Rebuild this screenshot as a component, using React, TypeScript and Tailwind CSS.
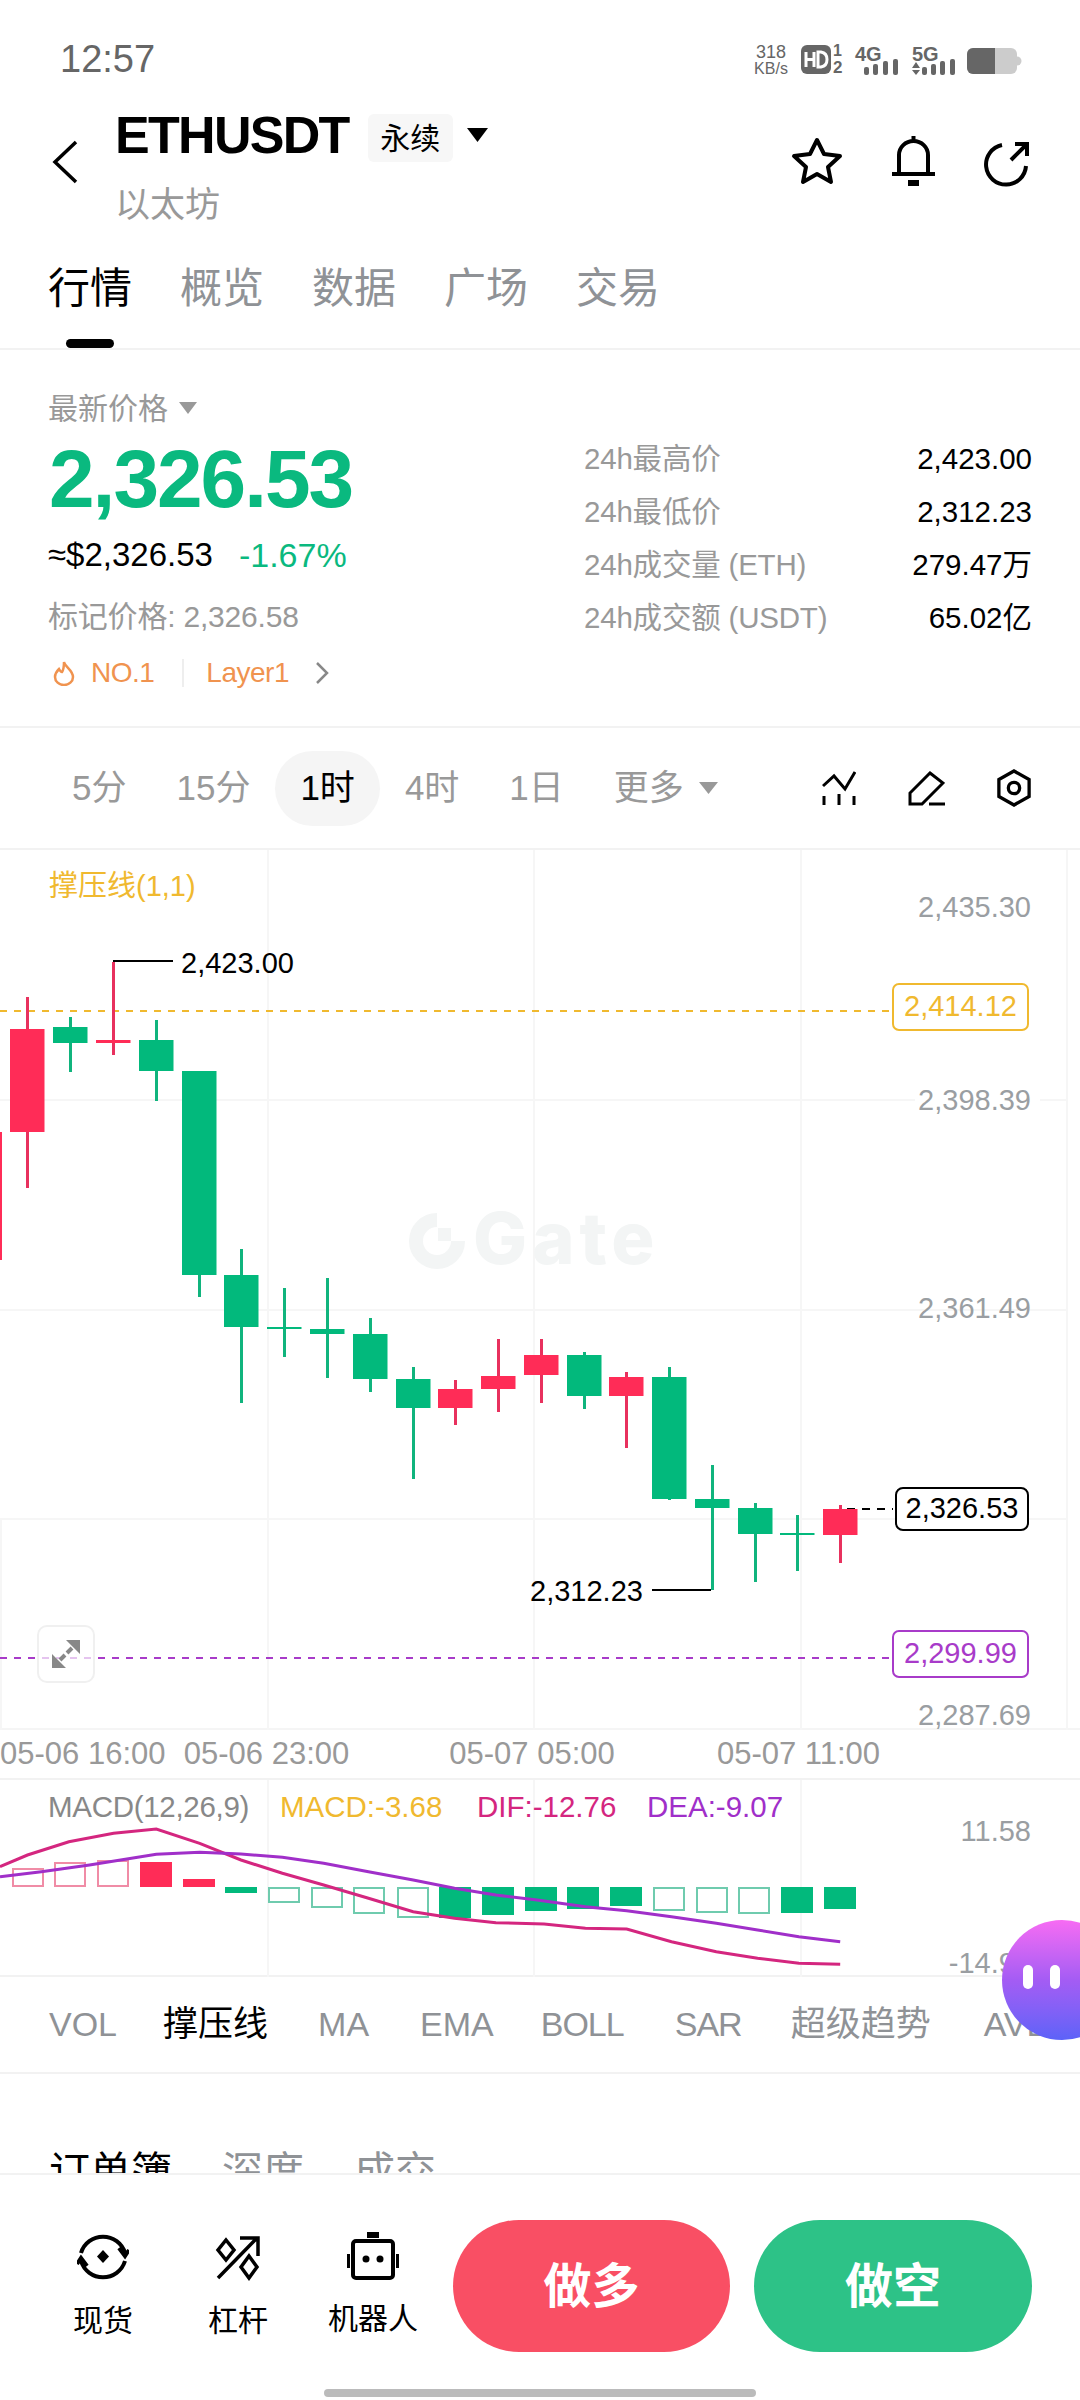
import React from "react";

type C = [number, number, number, number, number, "g" | "r"];
const candles: C[] = [
  [10, 1029, 1132, 997, 1188, "r"],
  [53, 1027, 1043, 1017, 1072, "g"],
  [96, 1040, 1043, 962, 1055, "r"],
  [139, 1040, 1071, 1020, 1101, "g"],
  [182, 1071, 1275, 1071, 1297, "g"],
  [224, 1275, 1327, 1249, 1403, "g"],
  [267, 1327, 1329, 1288, 1357, "g"],
  [310, 1329, 1334, 1278, 1378, "g"],
  [353, 1334, 1379, 1318, 1392, "g"],
  [396, 1379, 1408, 1367, 1479, "g"],
  [438, 1389, 1408, 1380, 1425, "r"],
  [481, 1376, 1389, 1339, 1412, "r"],
  [524, 1355, 1375, 1339, 1403, "r"],
  [567, 1355, 1396, 1352, 1409, "g"],
  [609, 1377, 1396, 1372, 1448, "r"],
  [652, 1377, 1499, 1367, 1500, "g"],
  [695, 1499, 1508, 1465, 1590, "g"],
  [738, 1508, 1534, 1503, 1582, "g"],
  [780, 1533, 1535, 1515, 1571, "g"],
  [823, 1509, 1535, 1505, 1563, "r"],
];

type B = [number, number, number, string, boolean];
const R = "#FF2C57";
const G = "#02B97C";
const bars: B[] = [
  [12, 1868, 1887, "#F08CA6", false],
  [54, 1862, 1887, "#F08CA6", false],
  [97, 1860, 1887, "#F08CA6", false],
  [140, 1862, 1887, R, true],
  [183, 1879, 1887, R, true],
  [225, 1887, 1893, G, true],
  [268, 1887, 1903, "#6FCBAE", false],
  [311, 1887, 1908, "#6FCBAE", false],
  [353, 1887, 1914, "#6FCBAE", false],
  [397, 1887, 1918, "#6FCBAE", false],
  [439, 1887, 1918, G, true],
  [482, 1887, 1915, G, true],
  [525, 1887, 1911, G, true],
  [567, 1887, 1909, G, true],
  [610, 1887, 1906, G, true],
  [653, 1887, 1911, "#6FCBAE", false],
  [696, 1887, 1913, "#6FCBAE", false],
  [738, 1887, 1914, "#6FCBAE", false],
  [781, 1887, 1913, G, true],
  [824, 1887, 1909, G, true],
];

const toPts = (p: number[][]) => p.map(([x, y]) => `${(x / 1.452).toFixed(1)},${(y / 3 + 1700).toFixed(1)}`).join(" ");
const dif = toPts([[0,500],[40,465],[100,425],[165,400],[227,387],[290,430],[350,480],[410,520],[470,555],[535,595],[600,635],[660,655],[720,668],[790,672],[850,685],[910,687],[975,725],[1040,755],[1100,775],[1160,790],[1220,793]]);
const dea = toPts([[0,530],[60,515],[130,495],[227,463],[290,457],[350,462],[410,472],[470,490],[535,515],[600,540],[660,565],[720,585],[780,600],[850,620],[910,632],[975,650],[1040,670],[1100,690],[1160,710],[1220,725]]);

function Caret({ className }: { className: string }) {
  return (
    <svg viewBox="0 0 20 14" className={className} preserveAspectRatio="none">
      <path d="M0 0H20L10 14Z" fill="currentColor" />
    </svg>
  );
}

function StatusIcons() {
  return (
    <svg viewBox="800 40 225 40" className="w-[225px] h-[40px]">
      <rect x="801" y="45" width="30" height="29" rx="6" fill="#666" />
      <path d="M806 52v15M806 59.500h8M814 52v15" stroke="#fff" strokeWidth="3" fill="none" />
      <path d="M818 52v15h3q6-1 6-7.500t-6-7.500z" stroke="#fff" strokeWidth="3" fill="none" />
      <rect x="864" y="67" width="5" height="8" rx="2" fill="#666" />
      <rect x="873" y="64" width="5" height="11" rx="2" fill="#666" />
      <rect x="883" y="61" width="5" height="14" rx="2" fill="#666" />
      <rect x="893" y="59" width="5" height="16" rx="2" fill="#666" />
      <path d="M912 68h8l-4-6zM912 70h8l-4 5z" fill="#666" />
      <rect x="922" y="67" width="5" height="8" rx="2" fill="#666" />
      <rect x="931" y="64" width="5" height="11" rx="2" fill="#666" />
      <rect x="940" y="61" width="5" height="14" rx="2" fill="#666" />
      <rect x="950" y="59" width="5" height="16" rx="2" fill="#666" />
      <rect x="967" y="48" width="50" height="26" rx="6" fill="#ccc" />
      <path d="M973 48h22v26h-22a6 6 0 0 1-6-6v-14a6 6 0 0 1 6-6z" fill="#666" />
      <path d="M1017 56.500a4.500 4.500 0 0 1 0 9z" fill="#ccc" />
    </svg>
  );
}

export default function App() {
  return (
    <div className="relative w-[1080px] h-[2400px] overflow-hidden bg-white text-black [font-family:'Liberation_Sans','Noto_Sans_CJK_SC',sans-serif]">
      {/* status bar */}
      <div className="relative h-[106px] pl-[60px] pt-[40px]">
        <span className="text-[38px] leading-[38px] text-[#666]">12:57</span>
        <div className="absolute left-[800px] top-[40px]">
          <StatusIcons />
          <span className="absolute left-[-48px] top-[3px] w-[38px] text-center text-[18px] leading-[18px] text-[#666]">318</span>
          <span className="absolute left-[-48px] top-[21px] w-[38px] text-center text-[16px] leading-[16px] text-[#666]">KB/s</span>
          <span className="absolute left-[33px] top-[3px] text-[16px] leading-[16px] font-bold text-[#666]">1</span>
          <span className="absolute left-[33px] top-[20px] text-[17px] leading-[16px] font-bold text-[#666]">2</span>
          <span className="absolute left-[55px] top-[4px] text-[20px] leading-[20px] font-bold text-[#666]">4G</span>
          <span className="absolute left-[112px] top-[4px] text-[20px] leading-[20px] font-bold text-[#666]">5G</span>
        </div>
      </div>

      {/* header */}
      <div className="flex h-[134px] pl-[52px] pr-[50px]">
        <svg viewBox="0 0 26 44" className="w-[26px] h-[44px] mt-[34px]" fill="none" stroke="#000" strokeWidth="3.500">
          <path d="M24 2L3 22L24 42" />
        </svg>
        <div className="ml-[37px] flex flex-col">
          <div className="flex h-[58px] items-center">
            <span className="text-[52px] leading-[58px] font-bold tracking-[-1.700px]">ETHUSDT</span>
            <span className="ml-[19px] mt-[6px] flex h-[48px] w-[85px] items-center justify-center rounded-[6px] bg-[#f7f7f7] text-[30px]">永续</span>
            <Caret className="ml-[14px] w-[21px] h-[14px]" />
          </div>
          <div className="mt-[11px] h-[60px] text-[35px] leading-[60px] text-[#999]">以太坊</div>
        </div>
        <div className="ml-auto flex items-start gap-[48px] pt-[30px]">
          <svg viewBox="0 0 52 48" className="w-[52px] h-[48px] mt-[1px]" fill="none" stroke="#000" strokeWidth="4" strokeLinejoin="round">
            <path d="M26 3L33 17L49 19L37 30L40 45L26 37L12 45L15 30L3 19L19 17Z" />
          </svg>
          <svg viewBox="0 0 45 50" className="w-[45px] h-[50px]" fill="none" stroke="#000" strokeWidth="4">
            <path d="M22.500 0v5M8 36V19a14.500 14 0 0 1 29 0V36M1 38H44" />
            <rect x="17" y="44" width="11" height="6" fill="#000" stroke="none" />
          </svg>
          <svg viewBox="0 0 46 46" className="w-[46px] h-[46px] mt-[5px]" fill="none" stroke="#000" strokeWidth="4">
            <path d="M18 4A20 20 0 1 0 42 25M27 19L43 3M31 3H43V15" />
          </svg>
        </div>
      </div>

      {/* tabs */}
      <div className="flex h-[110px] gap-[48px] border-b-2 border-[#f2f2f2] pl-[48px] pt-[24px] text-[42px] leading-[50px] text-[#8f9296]">
        <div className="relative flex flex-col items-center text-black">
          行情
          <div className="absolute top-[75px] h-[9px] w-[48px] rounded-full bg-black" />
        </div>
        <div>概览</div>
        <div>数据</div>
        <div>广场</div>
        <div>交易</div>
      </div>

      {/* price */}
      <div className="flex h-[378px] justify-between border-b-2 border-[#f2f2f2] pl-[48px] pr-[48px]">
        <div className="pt-[40px]">
          <div className="flex h-[36px] items-center text-[30px] text-[#999]">
            最新价格
            <Caret className="ml-[11px] w-[18px] h-[12px]" />
          </div>
          <div className="mt-[13px] ml-[1px] h-[80px] text-[82px] leading-[80px] font-bold tracking-[-2px] text-[#0AB97F]">2,326.53</div>
          <div className="mt-[16px] flex h-[40px] items-center gap-[26px]">
            <span className="text-[33px]">≈$2,326.53</span>
            <span className="text-[34px] text-[#0AB97F]">-1.67%</span>
          </div>
          <div className="mt-[22px] h-[40px] text-[30px] leading-[40px] tracking-[-0.200px] text-[#999]">标记价格: 2,326.58</div>
          <div className="mt-[18px] flex h-[36px] items-center text-[28px] tracking-[-0.500px] text-[#F0934F]">
            <svg viewBox="0 0 22 26" className="ml-[5px] w-[22px] h-[26px]" fill="none" stroke="#F0934F" strokeWidth="2.500">
              <path d="M11 2C12 7 20 10 20 17A9 8 0 0 1 2 17C2 13 4 11 6 9C7 11 8 12 9 12C11 9 11 5 11 2Z" />
            </svg>
            <span className="ml-[16px]">NO.1</span>
            <div className="ml-[28px] h-[28px] w-[2px] bg-[#eee]" />
            <span className="ml-[22px]">Layer1</span>
            <svg viewBox="0 0 14 24" className="ml-[26px] w-[14px] h-[24px]" fill="none" stroke="#888" strokeWidth="2.500">
              <path d="M2 2L12 12L2 22" />
            </svg>
          </div>
        </div>
        <div className="w-[448px] pt-[82px] text-[29.500px] leading-[53px]">
          <div className="flex justify-between"><span className="tracking-[-0.200px] text-[#999]">24h最高价</span><span>2,423.00</span></div>
          <div className="flex justify-between"><span className="tracking-[-0.200px] text-[#999]">24h最低价</span><span>2,312.23</span></div>
          <div className="flex justify-between"><span className="tracking-[-0.200px] text-[#999]">24h成交量 (ETH)</span><span>279.47万</span></div>
          <div className="flex justify-between"><span className="tracking-[-0.200px] text-[#999]">24h成交额 (USDT)</span><span>65.02亿</span></div>
        </div>
      </div>

      {/* intervals */}
      <div className="flex h-[122px] items-center border-b-2 border-[#f2f2f2] pl-[47px] pr-[49px] text-[35px] text-[#999]">
        <div className="px-[25px]">5分</div>
        <div className="px-[25px]">15分</div>
        <div className="flex h-[75px] items-center rounded-full bg-[#f5f5f5] px-[25px] text-black">1时</div>
        <div className="px-[25px]">4时</div>
        <div className="px-[25px]">1日</div>
        <div className="flex items-center pl-[25px]">
          更多
          <Caret className="ml-[15px] w-[19px] h-[12px]" />
        </div>
        <div className="ml-auto flex items-center gap-[52px]">
          <svg viewBox="0 0 34 34" className="w-[34px] h-[34px]" fill="none" stroke="#000" strokeWidth="3">
            <path d="M1 15L12 5L23 18L33 1M2 25V34M17 23V34M32 25V34" />
          </svg>
          <svg viewBox="0 0 37 35" className="w-[37px] h-[35px]" fill="none" stroke="#000" strokeWidth="3">
            <path d="M22 2L35 12L14 33H2V22ZM21 33H37" />
          </svg>
          <svg viewBox="0 0 36 40" className="w-[34px] h-[38px]" fill="none" stroke="#000" strokeWidth="3.500">
            <path d="M18 2L34 11V29L18 38L2 29V11Z" />
            <circle cx="18" cy="20" r="6" />
          </svg>
        </div>
      </div>

      {/* chart */}
      <div className="relative h-[880px] border-b-2 border-[#f5f5f5]">
        <svg viewBox="0 850 1080 880" className="absolute inset-0 w-[1080px] h-[880px]">
          <g stroke="#f6f6f6" strokeWidth="2" fill="none">
            <path d="M268 850V1730M534 850V1730M801 850V1730M1067 850V1730M1 1520V1730" />
            <path d="M0 1100H915M1040 1100H1067M0 1310H1067M0 1519H1067" />
          </g>
          <path d="M0 1011H892" stroke="#F0B92F" strokeWidth="2" strokeDasharray="7 7" />
          <path d="M0 1658H892" stroke="#A83BC9" strokeWidth="2" strokeDasharray="7 7" />
          <rect x="0" y="1132" width="2" height="128" fill={R} />
          <path d="M113 961H173M652 1590H711" stroke="#000" strokeWidth="2" />
          <path d="M847 1509H893" stroke="#000" strokeWidth="2" strokeDasharray="8 7" />
          {candles.map(([x, t, b, wt, wb, c], i) => (
            <g key={i}>
              <rect x={x + 16} y={wt} width="3" height={wb - wt} fill={c === "g" ? "#10B47D" : "#E8315E"} />
              <rect x={x} y={t} width="34.500" height={b - t} fill={c === "g" ? G : R} />
            </g>
          ))}
          {/* watermark logo */}
          <path d="M437 1220A21 21 0 1 0 458 1241" fill="none" stroke="#f3f5f5" strokeWidth="14" />
          <rect x="438" y="1228" width="13" height="13" fill="#f3f5f5" />
        </svg>
        <span className="absolute left-[473px] top-[343px] text-[72px] leading-[90px] font-extrabold tracking-[5px] text-[#f3f5f5] [font-family:Inter,sans-serif]">Gate</span>
        <span className="absolute left-[49px] top-[18px] text-[29px] leading-[36px] text-[#F0B92F]">撑压线(1,1)</span>
        <span className="absolute left-[181px] top-[95px] text-[29px] leading-[36px]">2,423.00</span>
        <span className="absolute left-[530px] top-[723px] text-[29px] leading-[36px]">2,312.23</span>
        <span className="absolute right-[49px] top-[39px] text-[29px] leading-[36px] text-[#9a9ea2]">2,435.30</span>
        <span className="absolute right-[49px] top-[232px] text-[29px] leading-[36px] text-[#9a9ea2]">2,398.39</span>
        <span className="absolute right-[49px] top-[440px] text-[29px] leading-[36px] text-[#9a9ea2]">2,361.49</span>
        <span className="absolute right-[49px] top-[847px] text-[29px] leading-[36px] text-[#9a9ea2]">2,287.69</span>
        <div className="absolute left-[892px] top-[133px] flex h-[48px] w-[137px] items-center justify-center rounded-[7px] border-2 border-[#F0B92F] bg-white text-[29px] text-[#F0B92F]">2,414.12</div>
        <div className="absolute left-[895px] top-[637px] flex h-[44px] w-[134px] items-center justify-center rounded-[8px] border-2 border-black bg-white text-[29px]">2,326.53</div>
        <div className="absolute left-[892px] top-[780px] flex h-[48px] w-[137px] items-center justify-center rounded-[7px] border-2 border-[#A83BC9] bg-white text-[29px] text-[#A83BC9]">2,299.99</div>
        <div className="absolute left-[37px] top-[775px] flex h-[58px] w-[58px] items-center justify-center rounded-[10px] border-2 border-[#f0f0f0] bg-white/70">
          <svg viewBox="0 0 28 28" className="w-[28px] h-[28px]">
            <path d="M14 0H28V14ZM0 14V28H14Z" fill="#888" />
            <path d="M20 8L15 13M8 20L13 15" stroke="#888" strokeWidth="4" />
          </svg>
        </div>
      </div>

      {/* time axis */}
      <div className="flex h-[50px] items-center border-b-2 border-[#f2f2f2] text-[31px] text-[#999]">
        <div className="w-[134px] whitespace-nowrap">05-06 16:00</div>
        <div className="w-[265px] text-center whitespace-nowrap">05-06 23:00</div>
        <div className="w-[266px] text-center whitespace-nowrap">05-07 05:00</div>
        <div className="w-[267px] text-center whitespace-nowrap">05-07 11:00</div>
      </div>

      {/* macd */}
      <div className="relative h-[197px] border-b-2 border-[#f2f2f2]">
        <svg viewBox="0 1780 1080 197" className="absolute inset-0 w-[1080px] h-[197px]">
          <g stroke="#f6f6f6" strokeWidth="2">
            <path d="M268 1780V1977M534 1780V1977M801 1780V1977" />
          </g>
          {bars.map(([x, t, b, c, solid], i) =>
            solid ? (
              <rect key={i} x={x} y={t} width="32" height={b - t} fill={c} />
            ) : (
              <rect key={i} x={x + 1} y={t + 1} width="30" height={b - t - 2} fill="none" stroke={c} strokeWidth="2" />
            )
          )}
          <polyline points={dif} fill="none" stroke="#D4267F" strokeWidth="3" />
          <polyline points={dea} fill="none" stroke="#A02FC9" strokeWidth="3" />
        </svg>
        <div className="absolute left-[48px] top-[9px] flex text-[29.500px] leading-[36px]">
          <span className="w-[232px] tracking-[-0.300px] text-[#888]">MACD(12,26,9)</span>
          <span className="w-[197px] text-[#F0B92F]">MACD:-3.68</span>
          <span className="w-[170px] text-[#D4267F]">DIF:-12.76</span>
          <span className="text-[#A02FC9]">DEA:-9.07</span>
        </div>
        <span className="absolute right-[49px] top-[33px] text-[29px] leading-[36px] text-[#9a9ea2]">11.58</span>
        <span className="absolute right-[49px] top-[165px] text-[29px] leading-[36px] text-[#9a9ea2]">-14.94</span>
      </div>

      {/* indicators */}
      <div className="flex h-[97px] items-center overflow-hidden border-b-2 border-[#f2f2f2] pl-[49px] text-[34px] whitespace-nowrap text-[#8f9296]">
        <span>VOL</span>
        <span className="ml-[46px] text-[35px] text-black">撑压线</span>
        <span className="ml-[50px]">MA</span>
        <span className="ml-[51px]">EMA</span>
        <span className="ml-[47px] tracking-[-1px]">BOLL</span>
        <span className="ml-[51px] tracking-[-1px]">SAR</span>
        <span className="ml-[49px] text-[35px]">超级趋势</span>
        <span className="ml-[53px]">AVL</span>
      </div>

      {/* order book tabs (clipped by the bottom bar) */}
      <div className="flex gap-[50px] pl-[49px] pt-[73px] text-[41px] leading-[50px] text-[#8f9296]">
        <span className="text-black">订单簿</span>
        <span>深度</span>
        <span>成交</span>
      </div>

      {/* floating assistant */}
      <div className="absolute left-[1002px] top-[1920px] h-[120px] w-[120px] rounded-full bg-linear-to-b from-[#F76BF3] via-[#A45CF4] to-[#5C62F8]">
        <div className="absolute left-[21px] top-[45px] h-[24px] w-[10px] rounded-full bg-white" />
        <div className="absolute left-[48px] top-[45px] h-[24px] w-[10px] rounded-full bg-white" />
      </div>

      {/* bottom bar */}
      <div className="absolute bottom-0 left-0 h-[227px] w-[1080px] border-t-2 border-[#f2f2f2] bg-white">
        <div className="flex pl-[453px] pr-[48px] pt-[45px]">
          <div className="flex h-[132px] w-[277px] items-center justify-center rounded-full bg-[#F94F64] pt-[2px] text-[48px] font-bold text-white">做多</div>
          <div className="ml-[24px] flex h-[132px] w-[278px] items-center justify-center rounded-full bg-[#2DC287] pt-[2px] text-[48px] font-bold text-white">做空</div>
        </div>
        <div className="absolute left-[61px] top-[56px] flex w-[84px] flex-col items-center">
          <svg viewBox="0 0 52 52" className="w-[52px] h-[52px]" fill="none" stroke="#000" strokeWidth="4">
            <path d="M4 22A23 23 0 0 1 48 22M42 17L48 25L52 19M48 30A23 23 0 0 1 4 30M10 35L4 27L0 33" />
            <path d="M26 19L32 25.500L26 32L20 25.500Z" fill="#000" stroke="none" />
          </svg>
          <span className="mt-[19px] text-[30px] leading-[38px]">现货</span>
        </div>
        <div className="absolute left-[196px] top-[60px] flex w-[84px] flex-col items-center">
          <svg viewBox="0 0 46 46" className="w-[46px] h-[46px]" fill="none" stroke="#000" strokeWidth="3.500">
            <path d="M3 43L42 3M25 3H43V21" />
            <path d="M11 5L19 15L11 25L3 15Z" />
            <path d="M34 21L42 32L34 43L26 32Z" />
          </svg>
          <span className="mt-[21px] text-[30px] leading-[38px]">杠杆</span>
        </div>
        <div className="absolute left-[323px] top-[57px] flex w-[100px] flex-col items-center">
          <svg viewBox="0 0 52 48" className="w-[52px] h-[48px]" fill="none" stroke="#000" strokeWidth="4">
            <rect x="20" y="0" width="12" height="6" fill="#000" stroke="none" />
            <rect x="6" y="9" width="40" height="37" rx="3" />
            <rect x="0" y="22" width="3" height="14" fill="#000" stroke="none" />
            <rect x="49" y="22" width="3" height="14" fill="#000" stroke="none" />
            <circle cx="19" cy="27" r="3.500" fill="#000" stroke="none" />
            <circle cx="33" cy="27" r="3.500" fill="#000" stroke="none" />
          </svg>
          <span className="mt-[20px] text-[30px] leading-[38px]">机器人</span>
        </div>
        <div className="absolute bottom-[3px] left-[324px] h-[8px] w-[432px] rounded-full bg-[#bbb]" />
      </div>
    </div>
  );
}
